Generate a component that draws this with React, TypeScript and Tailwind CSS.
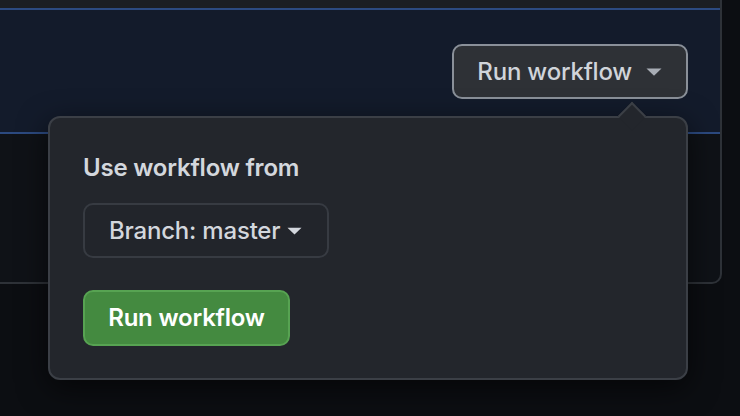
import React from "react";

function Caret({ className }: { className?: string }) {
  return (
    <svg className={className} viewBox="0 0 16 8" width="16" height="8" fill="currentColor">
      <path d="M0.5 0.5 L15.5 0.5 L8 7.8 Z" />
    </svg>
  );
}

export default function App() {
  return (
    <div
      className="relative w-[740px] h-[416px] overflow-hidden bg-[#0c0e12]"
      style={{ fontFamily: "Inter, 'Noto Sans', sans-serif" }}
    >
      <div className="w-[722px] h-[284px] flex flex-col bg-[#0f1217] border-r-2 border-b-2 border-[#2e3238] rounded-br-[10px] overflow-hidden">
        <div className="h-[8px] bg-[#1b1e23]" />
        <div className="h-[126px] flex items-center justify-end pr-[32px] bg-[#131b2b] border-y-2 border-[#2c4a80]">
          <div className="h-[55px] mt-[1px] flex items-center gap-[14px] pl-[23px] pr-[24px] rounded-[10px] border-2 border-[#8a9099] bg-[#2e3136] text-[#d0d4da] text-[24px] font-medium tracking-[-0.2px]">
            <span>Run workflow</span>
            <Caret className="text-[#a8adb5] w-[16px] h-[8px]" />
          </div>
        </div>
        <div className="flex-1" />
      </div>

      <div className="absolute left-[48px] top-[116px] w-[640px] h-[264px] rounded-[12px] border-2 border-[#3b3f46] bg-[#23262c] shadow-[0_8px_30px_rgba(0,0,0,0.6)] pl-[33px] pt-[35px]">
        <div className="absolute left-[572px] top-[-12px] w-[20px] h-[20px] rotate-45 bg-[#23262c] border-t-2 border-l-2 border-[#3b3f46]" />
        <div className="text-[24px] font-semibold text-[#d3d7dd] leading-[30px] tracking-[-0.2px]">Use workflow from</div>
        <div className="mt-[20px] w-[246px] h-[55px] flex items-center pl-[24px] gap-[7px] rounded-[10px] border-2 border-[#373b42] bg-[#22252b] text-[24px] font-medium text-[#d3d7dd] tracking-[-0.2px]">
          <span>Branch: master</span>
          <Caret className="text-[#d3d7dd] w-[15px] h-[8px]" />
        </div>
        <div className="mt-[32px] w-[207px] h-[56px] flex items-center justify-center rounded-[10px] border-2 border-[#57a352] bg-[#448a40] text-[24px] font-semibold text-white tracking-[-0.2px]">
          Run workflow
        </div>
      </div>
    </div>
  );
}
